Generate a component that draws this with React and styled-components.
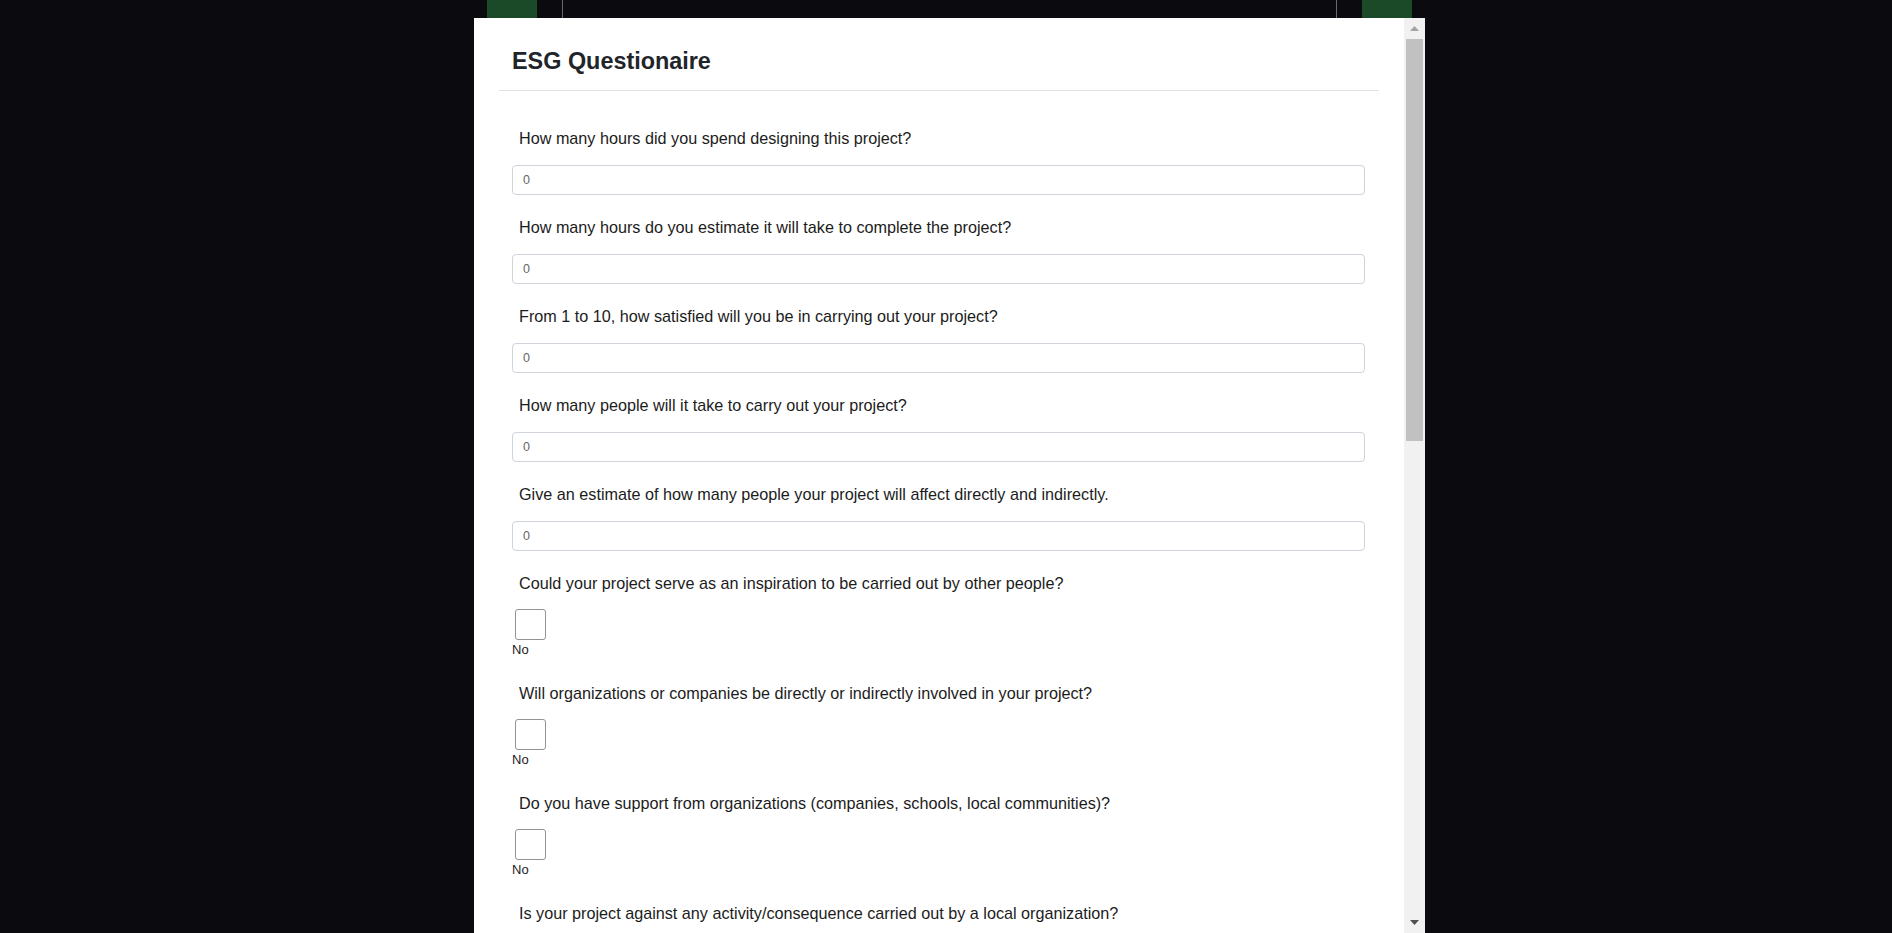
import React from "react";
import styled, { createGlobalStyle } from "styled-components";

const GlobalStyle = createGlobalStyle`
  html, body {
    margin: 0;
    padding: 0;
    height: 100%;
    overflow: hidden;
    background: #0a0a0f;
    font-family: "Liberation Sans", Arial, sans-serif;
  }
`;

const QUESTIONS = [
  { text: "How many hours did you spend designing this project?", type: "number" },
  { text: "How many hours do you estimate it will take to complete the project?", type: "number" },
  { text: "From 1 to 10, how satisfied will you be in carrying out your project?", type: "number" },
  { text: "How many people will it take to carry out your project?", type: "number" },
  { text: "Give an estimate of how many people your project will affect directly and indirectly.", type: "number" },
  { text: "Could your project serve as an inspiration to be carried out by other people?", type: "bool" },
  { text: "Will organizations or companies be directly or indirectly involved in your project?", type: "bool" },
  { text: "Do you have support from organizations (companies, schools, local communities)?", type: "bool" },
  { text: "Is your project against any activity/consequence carried out by a local organization?", type: "bool" },
];

const App = () => {
  return (
    <>
      <GlobalStyle />
      <Page>
        <GreenBlock />
        <MainColumn />
        <GreenBlock />
      </Page>
      <Overlay>
        <Modal>
          <ModalBody>
            <Header>
              <Title>ESG Questionaire</Title>
            </Header>
            <Form>
              {QUESTIONS.map((q, i) =>
                q.type === "number" ? (
                  <Field key={i}>
                    <Label>{q.text}</Label>
                    <TextInput type="text" defaultValue="0" />
                  </Field>
                ) : (
                  <Field key={i} $bool>
                    <Label>{q.text}</Label>
                    <Check type="checkbox" />
                    <CheckText>No</CheckText>
                  </Field>
                )
              )}
            </Form>
          </ModalBody>
          <Scrollbar>
            <ArrowButton>
              <svg width="9" height="5" viewBox="0 0 9 5">
                <path d="M4.5 0 L9 5 L0 5 Z" fill="#a3a3a3" />
              </svg>
            </ArrowButton>
            <Thumb />
            <TrackRest />
            <ArrowButton>
              <svg width="9" height="5" viewBox="0 0 9 5">
                <path d="M0 0 L9 0 L4.5 5 Z" fill="#505050" />
              </svg>
            </ArrowButton>
          </Scrollbar>
        </Modal>
      </Overlay>
    </>
  );
};

const Page = styled.div`
  display: flex;
  align-items: flex-start;
  gap: 25px;
  height: 100vh;
  padding-left: 487px;
  box-sizing: border-box;
`;
const GreenBlock = styled.div`
  width: 50px;
  height: 60px;
  background: #1b4a29;
`;
const MainColumn = styled.div`
  width: 775px;
  height: 100%;
  box-sizing: border-box;
  border-left: 1px solid #6a6a6a;
  border-right: 1px solid #6a6a6a;
`;
const Overlay = styled.div`
  position: fixed;
  inset: 0;
  display: flex;
  align-items: stretch;
`;
const Modal = styled.div`
  display: flex;
  width: 951px;
  margin: 18px 0 0 474px;
  background: #fff;
  overflow: hidden;
`;
const ModalBody = styled.div`
  flex: 1;
  overflow: hidden;
`;
const Header = styled.div`
  margin: 0 25px;
  padding: 29px 13px 14px;
  border-bottom: 1px solid #dee2e6;
`;
const Title = styled.h2`
  margin: 0;
  font-size: 23.4px;
  line-height: 28.8px;
  font-weight: 700;
  color: #212529;
`;
const Form = styled.form`
  padding: 35px 39px 0 38px;
`;
const Field = styled.div`
  display: flex;
  flex-direction: column;
  align-items: flex-start;
  margin-bottom: ${(p) => (p.$bool ? "24px" : "20px")};
`;
const Label = styled.label`
  display: block;
  padding-left: 7px;
  margin-bottom: 15px;
  font-size: 16.2px;
  line-height: 24px;
  color: #1c1c1c;
  white-space: nowrap;
`;
const TextInput = styled.input`
  align-self: stretch;
  height: 30px;
  box-sizing: border-box;
  padding: 0 10px;
  border: 1px solid #ced4da;
  border-radius: 4px;
  font-family: "Liberation Sans", Arial, sans-serif;
  font-size: 12.5px;
  color: #666;
  outline: none;
`;
const Check = styled.input`
  appearance: none;
  width: 31px;
  height: 31px;
  margin: -1px 0 2px 3px;
  box-sizing: border-box;
  border: 1px solid #939393;
  border-radius: 3px;
  background: #fff;
`;
const CheckText = styled.span`
  font-size: 13px;
  line-height: 15px;
  color: #1c1c1c;
`;
const Scrollbar = styled.div`
  width: 21px;
  display: flex;
  flex-direction: column;
  background: #f1f1f1;
`;
const ArrowButton = styled.div`
  height: 21px;
  display: flex;
  align-items: center;
  justify-content: center;
`;
const Thumb = styled.div`
  height: 402px;
  margin: 0 2px;
  background: #c1c1c1;
`;
const TrackRest = styled.div`
  flex: 1;
`;

export default App;
